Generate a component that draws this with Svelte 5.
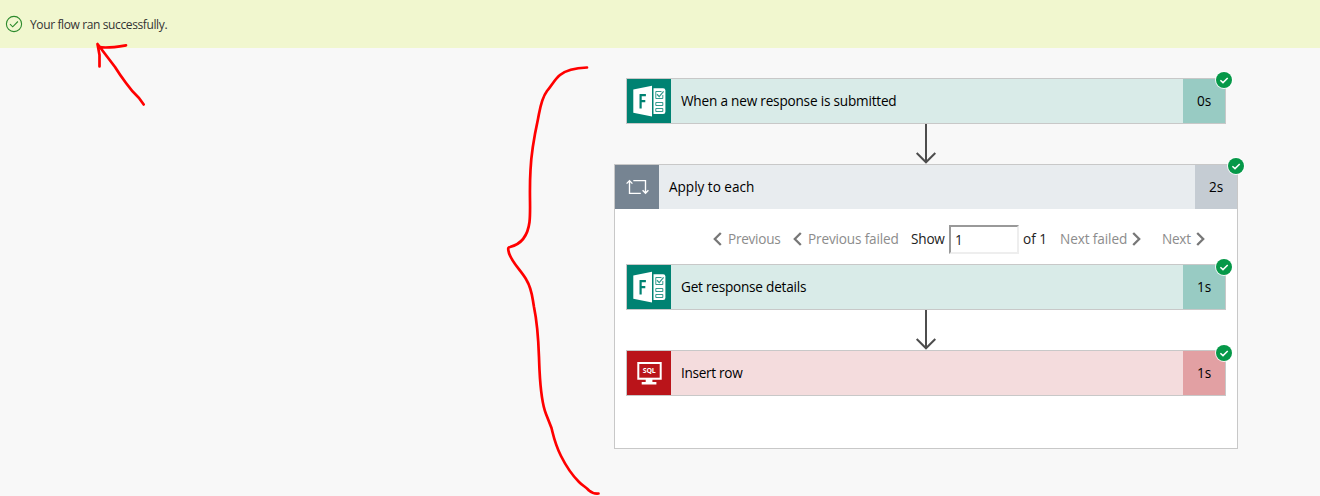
<script>
  const trigger = { kind: 'forms', title: 'When a new response is submitted', time: '0s', spacing: -0.2 };
  const details = { kind: 'forms', title: 'Get response details', time: '1s', spacing: -0.23 };
  const insert = { kind: 'sql', title: 'Insert row', time: '1s', spacing: -0.3 };
</script>

{#snippet badge()}
  <svg class="badge" width="18" height="18" viewBox="0 0 18 18">
    <circle cx="9" cy="9" r="9" fill="#fff" fill-opacity=".85" />
    <circle cx="9" cy="9" r="8" fill="#059848" />
    <path d="M5.4 9.2 8 11.6 12.7 7" fill="none" stroke="#fff" stroke-width="1.5" />
  </svg>
{/snippet}

{#snippet formsIcon()}
  <svg width="44" height="44" viewBox="0 0 44 44">
    <path d="M6.3 10.6 25 6.8v30.7L6.3 33.8Z" fill="#fff" />
    <path d="M12.7 16.2h6.2M13.6 15.2v14.2M13.6 22.2h4.7" fill="none" stroke="#008272" stroke-width="2.2" />
    <path d="M26.5 9.3h9.6q2.3 0 2.3 2.3v21.2q0 2.3-2.3 2.3h-9.6Z" fill="#fff" />
    <g fill="none" stroke="#008272" stroke-opacity=".8" stroke-width="1">
      <path d="M34.5 12.500h-5.700v7h7v-3.500" />
      <path d="m30 15.2 2.2 2.4 4.4-5.3" stroke-width="1.3" />
      <path d="M28.800 23.500h7v3h-7ZM28.800 29.500h7v3h-7Z" />
    </g>
  </svg>
{/snippet}

{#snippet sqlIcon()}
  <svg width="44" height="44" viewBox="0 0 44 44">
    <path d="M10.3 11h24.4v17.8H25.4v2.1h4v2.6H14.7v-2.600h4v-2.100h-8.400Z" fill="#fff" />
    <path d="M12.3 13h20.4v13.7H12.3Z" fill="#ba141a" />
    <text x="22.200" y="22.300" text-anchor="middle" class="label">SQL</text>
  </svg>
{/snippet}

{#snippet loopIcon()}
  <svg width="44" height="44" viewBox="0 0 44 44" fill="none" stroke="#fff" stroke-width="1.35">
    <path d="M25.800 28.400H14.500V16M11.600 18.600l2.900-3 2.900 3" />
    <path d="M18.300 15.600h12.200v12.500M27.600 25.300l2.900 3 2.900-3" />
  </svg>
{/snippet}

{#snippet card(step)}
  <div class="card {step.kind}">
    <div class="icon">
      {#if step.kind === 'sql'}{@render sqlIcon()}{:else}{@render formsIcon()}{/if}
    </div>
    <div class="title"><span style="letter-spacing: {step.spacing}px">{step.title}</span></div>
    <div class="time">{step.time}</div>
    {@render badge()}
  </div>
{/snippet}

{#snippet arrow()}
  <svg class="arrow" width="24" height="40" viewBox="0 0 24 40" fill="none" stroke="#4d4d4d" stroke-width="2">
    <path d="M12 0v38M2.7 29l9.3 9.3 9.3-9.3" />
  </svg>
{/snippet}

{#snippet chevron(dir)}
  <svg class="chevron" width="9" height="14" viewBox="0 0 9 14" fill="none" stroke="#777" stroke-width="2.3">
    <path d={dir === 'left' ? 'M7.8 1 1.8 7l6 6' : 'M1.2 1l6 6-6 6'} />
  </svg>
{/snippet}

<main>
  <header>
    <svg width="18" height="18" viewBox="0 0 18 18" fill="none" stroke="#2c8a2c" stroke-width="1.1">
      <circle cx="9" cy="9" r="7.6" />
      <path d="m5 9.2 2.7 2.6 5.2-5.3" />
    </svg>
    <span>Your flow ran successfully.</span>
  </header>

  <section class="flow">
    {@render card(trigger)}
    {@render arrow()}
    <div class="scope">
      <div class="scope-head">
        <div class="icon">{@render loopIcon()}</div>
        <div class="title"><span>Apply to each</span></div>
        <div class="time">2s</div>
        {@render badge()}
      </div>
      <div class="pager">
        <span class="link prev">{@render chevron('left')}<span>Previous</span></span>
        <span class="link prevf">{@render chevron('left')}<span>Previous failed</span></span>
        <span class="show">Show</span>
        <input value="1" />
        <span class="of">of 1</span>
        <span class="link nextf"><span>Next failed</span>{@render chevron('right')}</span>
        <span class="link next"><span>Next</span>{@render chevron('right')}</span>
      </div>
      <div class="inner">
        {@render card(details)}
        {@render arrow()}
        {@render card(insert)}
      </div>
    </div>
  </section>

  <svg class="ink" width="1320" height="496" viewBox="0 0 1320 496">
    <path d="M143.700 104.500 L139 98 Q132 91.500 126 83 Q120 75 115 67 L97.500 44 L99.500 55 V66.500 M98.500 46.500 Q104 49 126 45.300" />
    <path d="M587 67.500C574 68 566 70 560 75C555 79 552 85 547 91C541 99 540 109 538 119C533 142 531 158 530.500 170C529 195 531 208 529.500 222C528 234 522 244 510 247Q507.500 247 508.500 251C510 261 521 270 526.500 280C532 289 532 296 534 307C539 331 538.500 350 539.500 370C540.500 390 542 404 546 414Q548 419 551.500 428C554 438 555 444 561 456C566 466 572 475 579 482C583 486 586 487 589 490.500Q593 494 598.500 493.500" />
  </svg>
</main>

<style>
  :global(body) {
    background: #f8f8f8;
  }
  main {
    position: relative;
    height: 496px;
    overflow: hidden;
    background: #f8f8f8;
    color: #000;
    font: 13.6px/20px 'Open Sans', 'Noto Sans', sans-serif;
    white-space: nowrap;
  }
  header {
    display: flex;
    align-items: center;
    box-sizing: border-box;
    height: 48px;
    padding-left: 5px;
    gap: 7px;
    background: #f1f7cf;
    color: #333;
    font-size: 12px;
    letter-spacing: -0.38px;
  }
  header span {
    padding-top: 2px;
  }
  .flow {
    display: flex;
    flex-direction: column;
    align-items: center;
    width: 624px;
    margin-left: 614px;
    padding-top: 30px;
  }
  .card {
    position: relative;
    display: flex;
    box-sizing: border-box;
    width: 600px;
    height: 46px;
    border: 1px solid #c8c8c8;
  }
  .icon {
    width: 44px;
    height: 44px;
  }
  .icon svg,
  .arrow {
    display: block;
  }
  .title {
    flex: 1;
    padding-left: 10px;
    line-height: 44px;
  }
  .time {
    width: 42px;
    line-height: 44px;
    text-align: center;
    letter-spacing: -0.2px;
  }
  .forms { background: #d9ebe8; }
  .forms .icon { background: #008272; }
  .forms .time { background: #98cbc3; }
  .sql { background: #f4dcdd; }
  .sql .icon { background: #ba141a; }
  .sql .time { background: #e2a0a3; }
  .label {
    fill: #fff;
    font: 700 7px 'Open Sans', sans-serif;
    letter-spacing: -0.2px;
  }
  .badge {
    position: absolute;
    top: -8px;
    right: -8px;
  }
  .inner .badge {
    top: -7px;
  }
  .scope {
    box-sizing: border-box;
    width: 624px;
    height: 285px;
    border: 1px solid #c8c8c8;
    background: #fff;
  }
  .scope-head {
    position: relative;
    display: flex;
    height: 44px;
    background: #e8ecef;
  }
  .scope-head .icon { background: #768492; }
  .scope-head .time { background: #c5ccd3; }
  .scope-head .title { letter-spacing: -0.03px; }
  .pager {
    display: flex;
    align-items: center;
    height: 55px;
    padding: 5px 0 0 98px;
    box-sizing: border-box;
    color: #222;
  }
  .pager > span {
    flex: none;
  }
  .link {
    display: flex;
    align-items: center;
    gap: 5px;
    color: #8c8c8c;
    letter-spacing: -0.26px;
  }
  .prev,
  .prevf {
    gap: 6px;
  }
  .prev { width: 80px; }
  .prevf { width: 118px; letter-spacing: -0.16px; }
  .show { width: 38px; letter-spacing: -0.2px; }
  .of { width: 37px; padding-left: 4px; }
  .nextf { width: 102px; letter-spacing: -0.1px; }
  input {
    box-sizing: border-box;
    width: 70px;
    height: 29px;
    margin: 0;
    padding: 0 4px;
    border: 2px solid;
    border-color: #999 #eee #eee #999;
    background: #fff;
    color: #222;
    font: inherit;
  }
  .inner {
    display: flex;
    flex-direction: column;
    align-items: center;
  }
  .ink {
    position: absolute;
    inset: 0;
    fill: none;
    stroke: #f00;
    stroke-width: 2.7;
    stroke-linecap: round;
    stroke-linejoin: round;
    pointer-events: none;
  }
</style>
